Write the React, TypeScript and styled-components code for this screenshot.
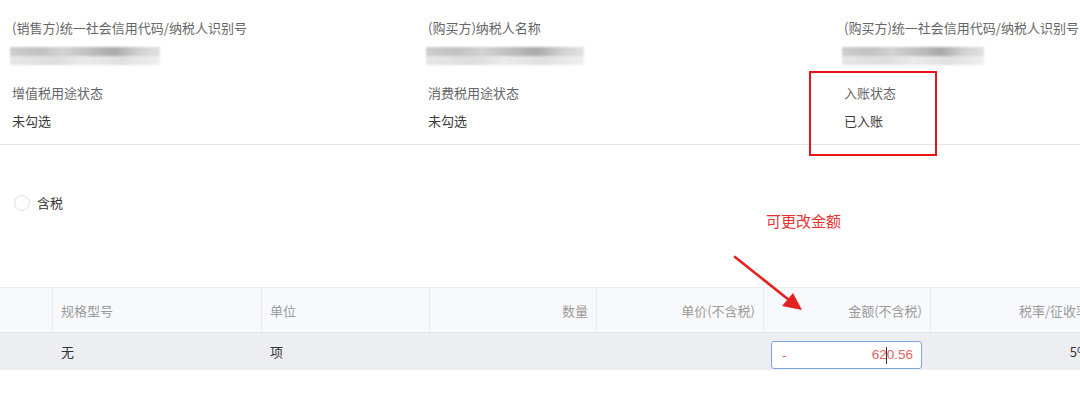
import React from "react"
import styled, { createGlobalStyle } from "styled-components"

const GlobalStyle = createGlobalStyle`
html, body {
  margin:0;
  padding:0;
  background:#fff;
}
body {
  font-family:"Noto Sans CJK SC", "Liberation Sans", sans-serif;
  overflow:hidden;
}
`

const Page = styled.div`
position:relative;
width:1080px;
height:411px;
overflow:hidden;
`

const InfoGrid = styled.div`
display:grid;
grid-template-columns:416px 416px 1fr;
row-gap:17px;
padding:18px 0 13px 12px;
border-bottom:1px solid #e4e5e8;
`

const Field = styled.div`
display:flex;
flex-direction:column;
gap:8px;
`

const Label = styled.div`
font-size:13px;
line-height:20px;
color:#666;
white-space:nowrap;
`

const Value = styled.div`
font-size:13px;
line-height:20px;
color:#3a3a3a;
white-space:nowrap;
`

const Redacted = styled.div<{ $w: number }>`
width:${p => p.$w}px;
height:20px;
display:flex;
flex-direction:column;
justify-content:center;
filter:blur(1px);
margin-left:-2px;
`

const BlurBand = styled.div<{ $dark?: boolean }>`
height:9px;
background:${p => p.$dark
  ? "linear-gradient(90deg,#cdcdcd 0%,#c2c2c2 20%,#d2d2d2 35%,#bdbdbd 55%,#a9a9a9 70%,#cfcfcf 85%,#e2e2e2 100%)"
  : "linear-gradient(90deg,#e6e6e6 0%,#dddddd 30%,#eaeaea 50%,#e0e0e0 75%,#f0f0f0 100%)"};
`

const RadioRow = styled.label`
display:flex;
align-items:center;
gap:7px;
margin:50px 0 0 14px;
font-size:13px;
line-height:16px;
color:#333;
`

const RadioCircle = styled.span`
width:14px;
height:14px;
border:1px solid #dcdfe6;
border-radius:50%;
background:#fff;
`

const TableWrap = styled.div`
margin-top:76px;
width:1097px;
`

const HeadRow = styled.div`
display:grid;
grid-template-columns:52px 209px 168px 167px 167px 167px 167px;
height:44px;
background:#f8f9fc;
border-top:1px solid #e9ebef;
border-bottom:1px solid #e2e4e8;
`

const HeadCell = styled.div<{ $right?: boolean }>`
display:flex;
align-items:center;
justify-content:${p => (p.$right ? "flex-end" : "flex-start")};
padding:0 8px;
font-size:13px;
color:#9a9a9a;
white-space:nowrap;
border-left:1px solid #e9ebef;
&:first-child { border-left:none; }
`

const BodyRow = styled.div`
display:grid;
grid-template-columns:52px 209px 168px 167px 167px 167px 167px;
height:37px;
background:#edeef1;
`

const BodyCell = styled.div<{ $right?: boolean }>`
display:flex;
align-items:center;
justify-content:${p => (p.$right ? "flex-end" : "flex-start")};
padding:0 8px 0 ${p => (p.$right ? "8px" : "9px")};
font-size:13px;
color:#333;
white-space:nowrap;
`

const AmountInput = styled.div`
flex:1;
height:26px;
margin-top:7px;
display:flex;
align-items:center;
justify-content:space-between;
padding:0 8px 0 10px;
background:#fff;
border:1px solid #7ea5e3;
border-radius:3px;
font-family:"Liberation Sans", sans-serif;
font-size:13.5px;
color:#e06464;
`

const Caret = styled.span`
display:inline-block;
width:1px;
height:17px;
background:#333;
vertical-align:middle;
margin:0 -0.5px;
`

/* annotation layer drawn over the screenshot */
const MarkBox = styled.div`
position:absolute;
left:809px;
top:71px;
width:124px;
height:81px;
border:2px solid #e8141b;
`

const MarkText = styled.div`
position:absolute;
left:766px;
top:211px;
font-size:15px;
line-height:20px;
color:#ea3232;
white-space:nowrap;
`

const MarkArrow = styled.svg`
position:absolute;
left:0;
top:0;
pointer-events:none;
`

const fields = [
  { label: "(销售方)统一社会信用代码/纳税人识别号", redact: 150 },
  { label: "(购买方)纳税人名称", redact: 158 },
  { label: "(购买方)统一社会信用代码/纳税人识别号", redact: 142 },
  { label: "增值税用途状态", value: "未勾选" },
  { label: "消费税用途状态", value: "未勾选" },
  { label: "入账状态", value: "已入账" },
]

const heads = [
  { t: "" },
  { t: "规格型号" },
  { t: "单位" },
  { t: "数量", r: true },
  { t: "单价(不含税)", r: true },
  { t: "金额(不含税)", r: true },
  { t: "税率/征收率", r: true },
]

export default function App() {
  return (
    <Page>
      <GlobalStyle />
      <InfoGrid>
        {fields.map(f => (
          <Field key={f.label}>
            <Label>{f.label}</Label>
            {f.redact ? (
              <Redacted $w={f.redact}>
                <BlurBand $dark />
                <BlurBand />
              </Redacted>
            ) : (
              <Value>{f.value}</Value>
            )}
          </Field>
        ))}
      </InfoGrid>

      <RadioRow>
        <RadioCircle />
        含税
      </RadioRow>

      <TableWrap>
        <HeadRow>
          {heads.map((h, i) => (
            <HeadCell key={i} $right={h.r}>{h.t}</HeadCell>
          ))}
        </HeadRow>
        <BodyRow>
          <BodyCell />
          <BodyCell>无</BodyCell>
          <BodyCell>项</BodyCell>
          <BodyCell $right />
          <BodyCell $right />
          <BodyCell $right>
            <AmountInput>
              <span>-</span>
              <span>62<Caret />0.56</span>
            </AmountInput>
          </BodyCell>
          <BodyCell $right>5%</BodyCell>
        </BodyRow>
      </TableWrap>

      <MarkBox />
      <MarkText>可更改金额</MarkText>
      <MarkArrow width="1080" height="411" viewBox="0 0 1080 411">
        <line x1="735" y1="257" x2="789" y2="300" stroke="#e52222" strokeWidth="2.6" strokeLinecap="round" />
        <polygon points="802,310 782,306 793,293" fill="#e52222" />
      </MarkArrow>
    </Page>
  )
}
